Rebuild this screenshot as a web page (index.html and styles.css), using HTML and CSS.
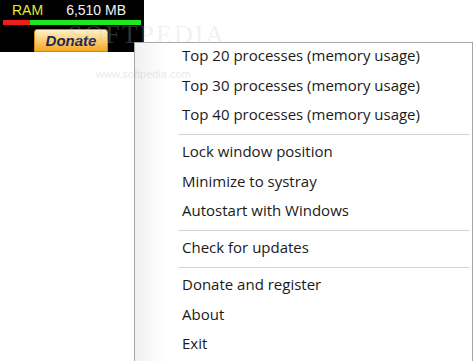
FILE: index.html
```html
<!DOCTYPE html>
<html lang="en">
<head>
    <meta charset="UTF-8">
    <meta name="viewport" content="width=device-width, initial-scale=1.0">
    <title>RAM Monitor</title>
    <link rel="stylesheet" href="styles.css">
</head>
<body>
    <div class="widget">
        <div class="readout">
            <span class="label">RAM</span>
            <span class="value">6,510 MB</span>
        </div>
        <div class="bar">
            <div class="bar-used"></div>
            <div class="bar-free"></div>
        </div>
        <div class="donate-row">
            <button class="donate">Donate</button>
        </div>
    </div>

    <ul class="menu">
        <li class="item">Top 20 processes (memory usage)</li>
        <li class="item">Top 30 processes (memory usage)</li>
        <li class="item">Top 40 processes (memory usage)</li>
        <li class="sep"></li>
        <li class="item">Lock window position</li>
        <li class="item">Minimize to systray</li>
        <li class="item">Autostart with Windows</li>
        <li class="sep"></li>
        <li class="item">Check for updates</li>
        <li class="sep"></li>
        <li class="item">Donate and register</li>
        <li class="item">About</li>
        <li class="item">Exit</li>
    </ul>

    <div class="watermark">
        <div class="wm-big">SOFTPEDIA</div>
        <div class="wm-small">www.softpedia.com</div>
    </div>
</body>
</html>
```

FILE: styles.css
```css
body {
    margin: 0;
    background: #fff;
    font-family: "Liberation Sans", Arial, sans-serif;
}

.widget {
    width: 144px;
    height: 52px;
    background: #000;
    box-sizing: border-box;
    padding: 2px 3px 0 3px;
}

.readout {
    display: flex;
    font-size: 14px;
    line-height: 16px;
    height: 17px;
}

.label {
    color: #e6e63c;
    margin-left: 9px;
}

.value {
    color: #f2f2f2;
    margin-left: 23px;
}

.bar {
    display: flex;
    height: 5px;
    margin-top: 1px;
}

.bar-used {
    width: 27px;
    background: #ee1c1c;
}

.bar-free {
    flex: 1;
    background: #1ee81e;
}

.donate-row {
    padding-left: 31px;
    margin-top: 4px;
}

.donate {
    width: 74px;
    height: 23px;
    border: 1px solid #d08a1c;
    border-radius: 3px 3px 0 0;
    background: linear-gradient(#fff2c8, #fcd27a 45%, #f5a623);
    font-family: "Liberation Sans", Arial, sans-serif;
    font-size: 15px;
    font-weight: bold;
    font-style: italic;
    color: #1b2a55;
    padding: 0;
}

.menu {
    position: absolute;
    left: 134px;
    top: 42px;
    width: 337px;
    margin: 0;
    padding: 0;
    list-style: none;
    border: 1px solid #a6a6a6;
    background: linear-gradient(90deg, #f0f0f0, #fafafa 18px, #fff 34px);
    font-family: "Open Sans", sans-serif;
    font-size: 15px;
    color: #1a1a1a;
}

.item {
    height: 29.5px;
    line-height: 24px;
    box-sizing: border-box;
    padding-left: 47px;
}

.sep {
    height: 1px;
    margin: 2px 2px 4.5px 43px;
    background: #d4d4d4;
}

.watermark {
    position: absolute;
    left: 68px;
    top: 22px;
    pointer-events: none;
}

.wm-big {
    font-family: "Liberation Serif", serif;
    font-size: 26px;
    letter-spacing: 2px;
    color: rgba(200, 200, 200, 0.25);
    line-height: 26px;
}

.wm-small {
    font-family: "Liberation Sans", sans-serif;
    font-size: 11px;
    color: rgba(180, 180, 180, 0.3);
    margin-left: 28px;
    margin-top: 20px;
}
```
